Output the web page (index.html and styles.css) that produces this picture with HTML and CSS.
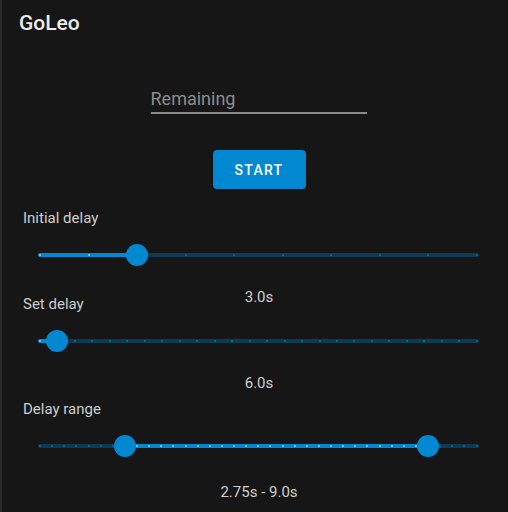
FILE: index.html
```
<!DOCTYPE html>
<html>
<head>
<title>GoLeo</title>
<link rel="stylesheet" href="styles.css">
</head>
<body>
<div class="app">
	<div class="title">GoLeo</div>
	<div class="remaining">
		<input type="text" id="remaining" placeholder="Remaining"/>
	</div>
	<div class="actions">
		<button id="start">Start</button>
	</div>
	<div class="setting first">
		<div class="name">Initial delay</div>
		<div class="slider" data-min="1" data-max="10" data-step="1" data-values="3"></div>
		<div class="value">3.0s</div>
	</div>
	<div class="setting second">
		<div class="name">Set delay</div>
		<div class="slider" data-min="5" data-max="30" data-step="1" data-values="6"></div>
		<div class="value">6.0s</div>
	</div>
	<div class="setting third">
		<div class="name">Delay range</div>
		<div class="slider" data-min="1" data-max="10" data-step="0.25" data-values="2.75,9"></div>
		<div class="value">2.75s - 9.0s</div>
	</div>
</div>
<script type="text/javascript">
	function pos(f){
		return "calc(2px + (100% - 4px) * "+f+")";
	}
	var sliders=document.querySelectorAll(".slider");
	for(var i=0;i<sliders.length;i++){
		var s=sliders[i];
		var min=Number(s.dataset.min), max=Number(s.dataset.max), step=Number(s.dataset.step);
		var vals=s.dataset.values.split(",").map(Number);
		var lo=vals.length>1?vals[0]:min, hi=vals[vals.length-1];
		var track=document.createElement("div");
		track.className="track";
		var fill=document.createElement("div");
		fill.className="fill";
		var a=vals.length>1?(lo-min)/(max-min):0, b=(hi-min)/(max-min);
		fill.style.left=vals.length>1?pos(a):"0";
		fill.style.width="calc("+pos(b)+" - "+(vals.length>1?pos(a):"0px")+")";
		track.appendChild(fill);
		var ticks=document.createElement("div");
		ticks.className="ticks";
		var n=Math.round((max-min)/step);
		for(var k=0;k<=n;k++){
			var v=min+k*step;
			var t=document.createElement("span");
			t.className=(v>=lo&&v<=hi)?"tick on":"tick";
			ticks.appendChild(t);
		}
		track.appendChild(ticks);
		for(var j=0;j<vals.length;j++){
			var th=document.createElement("div");
			th.className="thumb";
			th.style.left=pos((vals[j]-min)/(max-min));
			track.appendChild(th);
		}
		s.appendChild(track);
	}
</script>
</body>
</html>
```
FILE: styles.css
```
html,body{
	padding:0;
	margin:0;
	background-color:#161616;
	font-family:"Roboto","Liberation Sans",sans-serif;
	color:#cfcfcf;
}
div.app{
	height:512px;
	border-left:2px solid #2a2a2a;
	padding-left:8px;
	box-sizing:border-box;
}
div.title{
	padding:11px 0 0 9px;
	font-size:21px;
	line-height:24px;
	font-weight:500;
	color:#ececec;
}
div.remaining{
	display:flex;
	justify-content:center;
	margin-top:51px;
}
#remaining{
	width:216px;
	margin:0 1px 0 0;
	padding:0 0 2px 0;
	height:24px;
	box-sizing:content-box;
	border:none;
	border-bottom:2px solid #8a8a8a;
	background:transparent;
	font-family:inherit;
	font-size:18px;
	line-height:22px;
	color:#e0e0e0;
	outline:none;
}
#remaining::placeholder{
	color:#8c8c8c;
}
div.actions{
	display:flex;
	justify-content:center;
	margin-top:36px;
}
#start{
	width:93px;
	height:39px;
	border:none;
	border-radius:4px;
	background-color:#0288d1;
	color:#ffffff;
	font-family:inherit;
	font-size:14px;
	font-weight:500;
	letter-spacing:1.25px;
	text-transform:uppercase;
	box-shadow:0 2px 2px rgba(0,0,0,0.3);
}
div.setting>div.name{
	font-size:15px;
	line-height:16px;
	margin-left:13px;
	color:#cdcdcd;
}
div.setting>div.value{
	font-size:15px;
	line-height:16px;
	text-align:center;
	margin-top:19px;
}
div.setting.first{ margin-top:21px; }
div.setting.second{ margin-top:-9px; }
div.setting.third{ margin-top:10px; }
div.setting.third>div.value{ margin-top:23px; }
div.slider{
	height:30px;
	margin:14px 29px 0 28px;
	display:flex;
	align-items:center;
}
div.track{
	position:relative;
	width:100%;
	height:4px;
	border-radius:2px;
	background-color:#0d3a54;
}
div.fill{
	position:absolute;
	top:0;
	height:4px;
	border-radius:2px;
	background-color:#0288d1;
}
div.ticks{
	position:absolute;
	top:0;
	left:1px;
	right:1px;
	height:4px;
	display:flex;
	justify-content:space-between;
	align-items:center;
}
span.tick{
	width:2px;
	height:2px;
	border-radius:1px;
	background-color:#0a6ea6;
}
span.tick.on{
	background-color:rgba(255,255,255,0.55);
}
div.thumb{
	position:absolute;
	top:50%;
	width:22px;
	height:22px;
	border-radius:50%;
	background-color:#0288d1;
	transform:translate(-50%,-50%);
}
```
